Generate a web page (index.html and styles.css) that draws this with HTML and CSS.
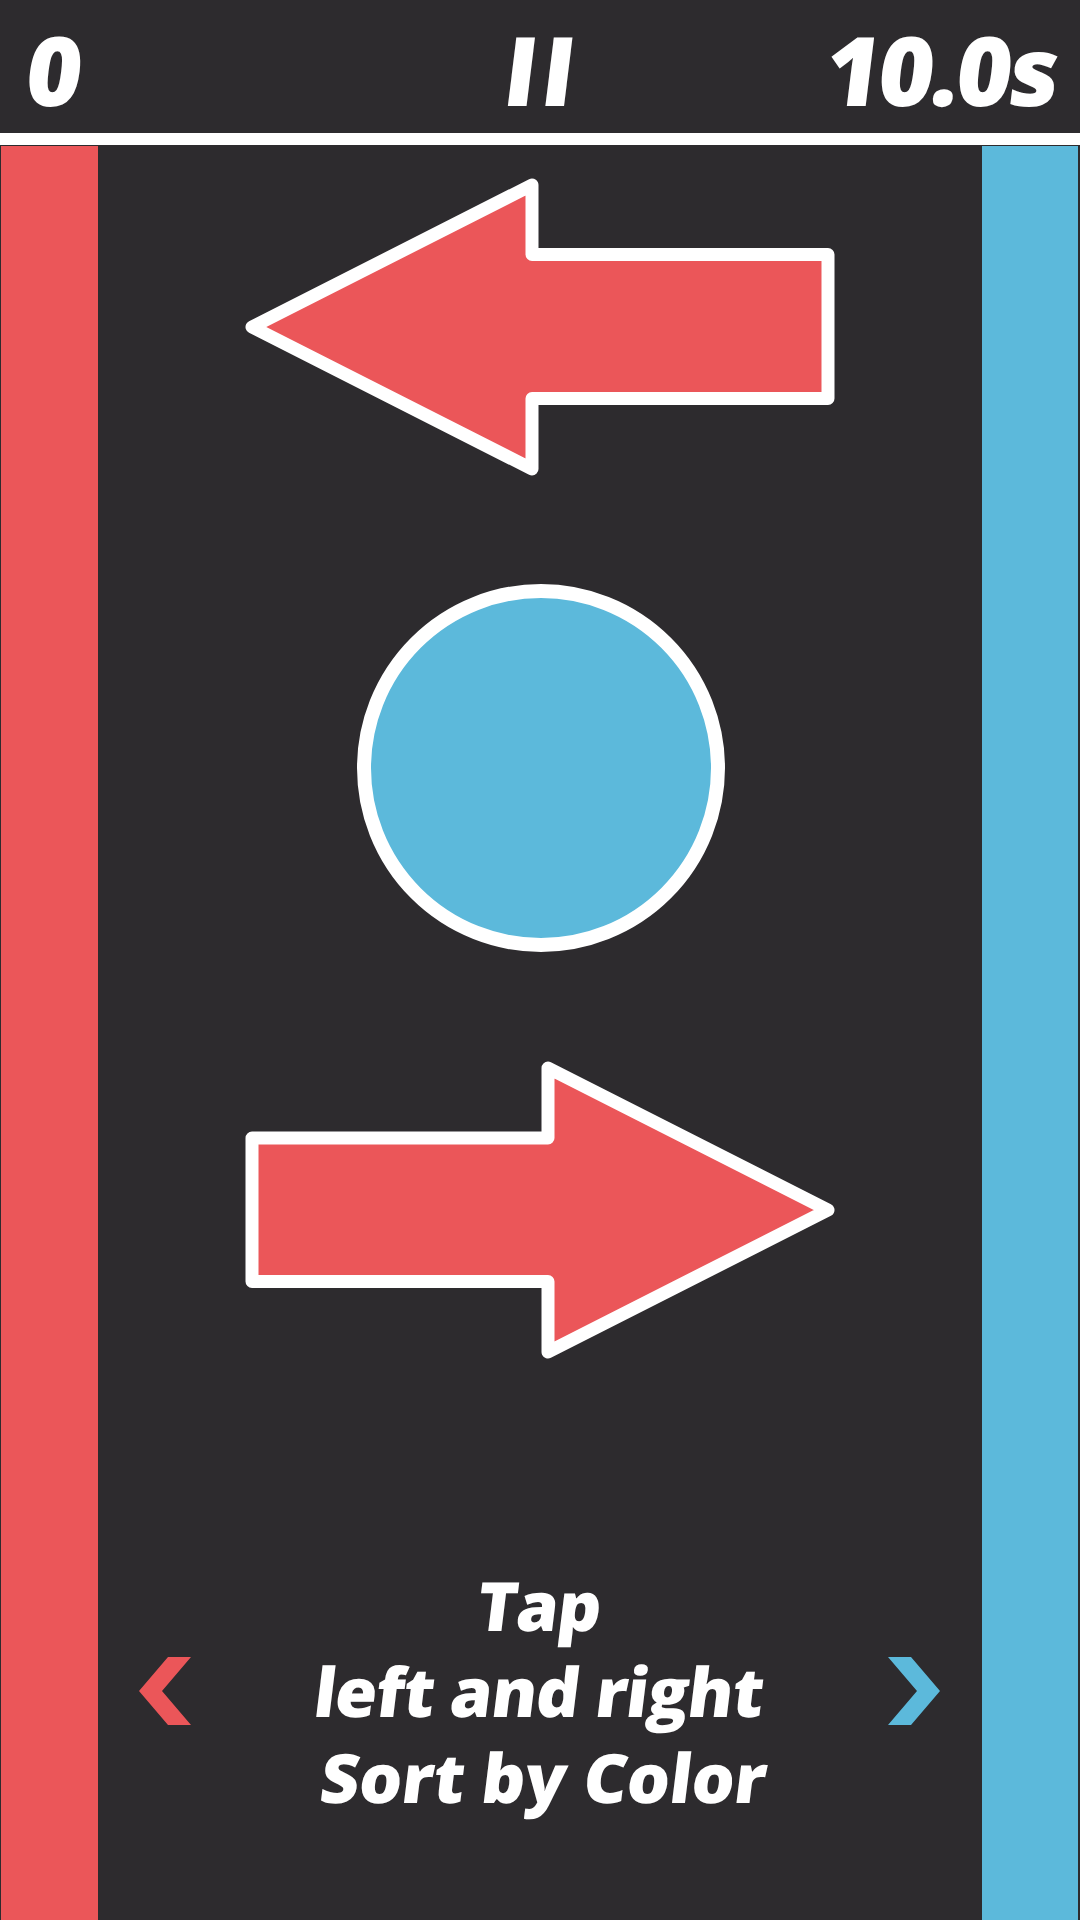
FILE: index.html
```html
<!DOCTYPE html>
<html lang="en">
<head>
<meta charset="utf-8">
<title>Sort by Color</title>
<link rel="stylesheet" href="styles.css">
</head>
<body>
<div class="screen">
  <header class="hud">
    <span class="score">0</span>
    <span class="pause">II</span>
    <span class="timer">10.0s</span>
  </header>
  <main class="field">
    <div class="bin bin-red"></div>
    <div class="lane">
      <svg class="arrow arrow-left" viewBox="0 0 600 300" width="600" height="300">
        <path d="M12 150 L292 8 L292 77.5 L588 77.5 L588 221.5 L292 221.5 L292 292 Z" fill="#eb5659" stroke="#fff" stroke-width="13" stroke-linejoin="round"/>
      </svg>
      <svg class="ball" viewBox="0 0 370 370" width="370" height="370">
        <circle cx="185" cy="185" r="177" fill="#5cb9db" stroke="#fff" stroke-width="14"/>
      </svg>
      <svg class="arrow arrow-right" viewBox="0 0 600 300" width="600" height="300">
        <path d="M12 78 L308 78 L308 8 L588 150 L308 292 L308 221.5 L12 221.5 Z" fill="#eb5659" stroke="#fff" stroke-width="13" stroke-linejoin="round"/>
      </svg>
      <div class="hint">
        <svg class="chev" viewBox="0 0 52 68" width="52" height="68">
          <polygon points="29,0 52,0 23,34 52,68 29,68 0,34" fill="#eb5659"/>
        </svg>
        <p class="hint-text"><span class="line">Tap</span><span class="line">left and right</span><span class="line line-wide">Sort by Color</span></p>
        <svg class="chev" viewBox="0 0 52 68" width="52" height="68">
          <polygon points="0,0 23,0 52,34 23,68 0,68 29,34" fill="#5cb9db"/>
        </svg>
      </div>
    </div>
    <div class="bin bin-blue"></div>
  </main>
</div>
</body>
</html>
```
FILE: styles.css
```css
html, body {
  margin: 0;
  padding: 0;
}
body {
  width: 1080px;
  height: 1920px;
  overflow: hidden;
  background: #2d2b2e;
  font-family: "Open Sans", "Lato", "Liberation Sans", sans-serif;
  color: #ffffff;
}
.screen {
  display: flex;
  flex-direction: column;
  height: 1920px;
}
.hud {
  display: grid;
  grid-template-columns: 1fr auto 1fr;
  align-items: start;
  height: 133px;
  padding: 0 23px 0 27px;
  border-bottom: 12px solid #ffffff;
  font-size: 96px;
  font-weight: 800;
  line-height: 138px;
}
.hud span {
  display: inline-block;
  transform: skewX(-7deg);
}
.score {
  justify-self: start;
}
.pause {
  justify-self: center;
  letter-spacing: 4px;
}
.timer {
  justify-self: end;
  letter-spacing: -3px;
}
.field {
  flex: 1;
  display: flex;
  padding-top: 1px;
}
.bin {
  width: 97px;
  flex: none;
}
.bin-red {
  background: #eb5659;
  margin-left: 1px;
}
.bin-blue {
  width: 96px;
  background: #5cb9db;
  margin-right: 2px;
}
.lane {
  flex: 1;
  display: flex;
  flex-direction: column;
  align-items: center;
}
.arrow, .ball {
  display: block;
  flex: none;
}
.arrow-left {
  margin-top: 31px;
}
.ball {
  margin-top: 106px;
  margin-left: 2px;
}
.arrow-right {
  margin-top: 107px;
}
.hint {
  align-self: stretch;
  display: flex;
  align-items: center;
  justify-content: space-between;
  margin-top: 202px;
  padding: 0 42px 0 41px;
}
.chev {
  display: block;
  flex: none;
}
.hint-text {
  margin: 0;
  display: flex;
  flex-direction: column;
  align-items: center;
  font-size: 68px;
  font-weight: 800;
  line-height: 86px;
  letter-spacing: -1px;
}
.line {
  display: block;
  white-space: nowrap;
  transform: skewX(-7deg);
}
.line-wide {
  letter-spacing: -0.4px;
  margin-left: 8px;
}
```
